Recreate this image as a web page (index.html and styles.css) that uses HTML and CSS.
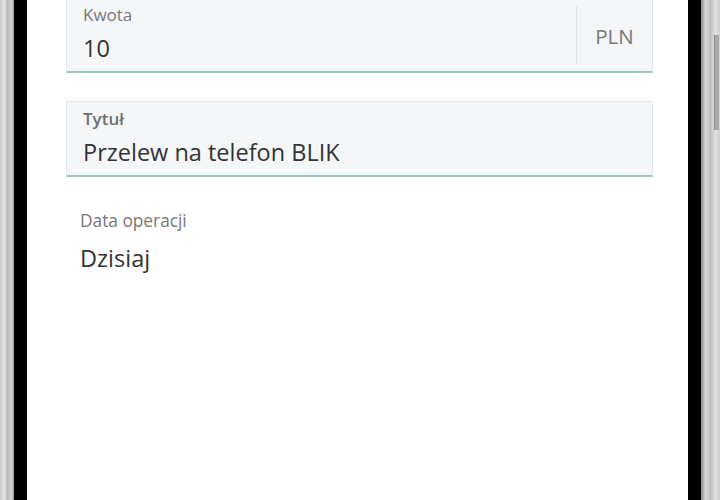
FILE: index.html
```html
<!DOCTYPE html>
<html lang="pl">
<head>
    <meta charset="UTF-8">
    <meta name="viewport" content="width=device-width, initial-scale=1.0">
    <title>Przelew na telefon BLIK</title>
    <link rel="stylesheet" href="styles.css">
</head>
<body>
    <div class="phone">
        <div class="bezel bezel-left"></div>
        <div class="edge"></div>
        <div class="screen">
            <div class="field field-amount">
                <div class="field-main">
                    <label class="field-label">Kwota</label>
                    <div class="field-value">10</div>
                </div>
                <div class="field-suffix">PLN</div>
            </div>

            <div class="field field-title">
                <div class="field-main">
                    <label class="field-label bold">Tytuł</label>
                    <div class="field-value">Przelew na telefon BLIK</div>
                </div>
            </div>

            <div class="static">
                <div class="static-label">Data operacji</div>
                <div class="static-value">Dzisiaj</div>
            </div>
        </div>
        <div class="edge"></div>
        <div class="bezel bezel-right">
            <div class="side-button"></div>
        </div>
    </div>
</body>
</html>
```

FILE: styles.css
```css
html, body {
    margin: 0;
    padding: 0;
    height: 100%;
}
body {
    font-family: "Open Sans", "Noto Sans", sans-serif;
    background: #fff;
    overflow: hidden;
}
.phone {
    display: flex;
    height: 500px;
}
.bezel {
    width: 14px;
    background: linear-gradient(90deg, #c9c9c9 0%, #e4e4e4 30%, #b5b5b5 55%, #d6d6d6 80%, #9a9a9a 100%);
}
.bezel-right {
    width: 19px;
    position: relative;
    background: linear-gradient(90deg, #8a8a8a 0%, #d8d8d8 25%, #bcbcbc 50%, #e2e2e2 75%, #cfcfcf 100%);
}
.side-button {
    position: absolute;
    left: 13px;
    top: 35px;
    width: 4px;
    height: 95px;
    background: #a8a8a8;
    border-left: 1px solid #8c8c8c;
}
.edge {
    width: 13px;
    background: #000;
}
.screen {
    flex: 1;
    background: #fff;
    padding: 0 35px 0 39px;
    display: flex;
    flex-direction: column;
}
.field {
    display: flex;
    height: 76px;
    box-sizing: border-box;
    background: #f4f6f7;
    border: 1px solid #e3e6e8;
    border-bottom: 2px solid #9ec8bd;
}
.field-amount {
    margin-top: -3px;
}
.field-title {
    margin-top: 28px;
}
.field-main {
    flex: 1;
    padding: 6px 16px 0;
}
.field-label {
    display: block;
    font-size: 17px;
    color: #787878;
    line-height: 22px;
}
.field-label.bold {
    font-weight: 600;
    color: #6e6e6e;
}
.field-value {
    font-size: 23.5px;
    color: #333;
    line-height: 32px;
    margin-top: 6px;
}
.field-suffix {
    width: 75px;
    margin: 8px 0 7px;
    border-left: 1px solid #dde0e2;
    display: flex;
    align-items: center;
    justify-content: center;
    padding-top: 2px;
    font-size: 20.5px;
    color: #777;
}
.static {
    padding: 33px 14px 0;
}
.static-label {
    font-size: 17.3px;
    color: #777;
    line-height: 22px;
}
.static-value {
    font-size: 23.5px;
    color: #333;
    line-height: 32px;
    margin-top: 10px;
}
```
